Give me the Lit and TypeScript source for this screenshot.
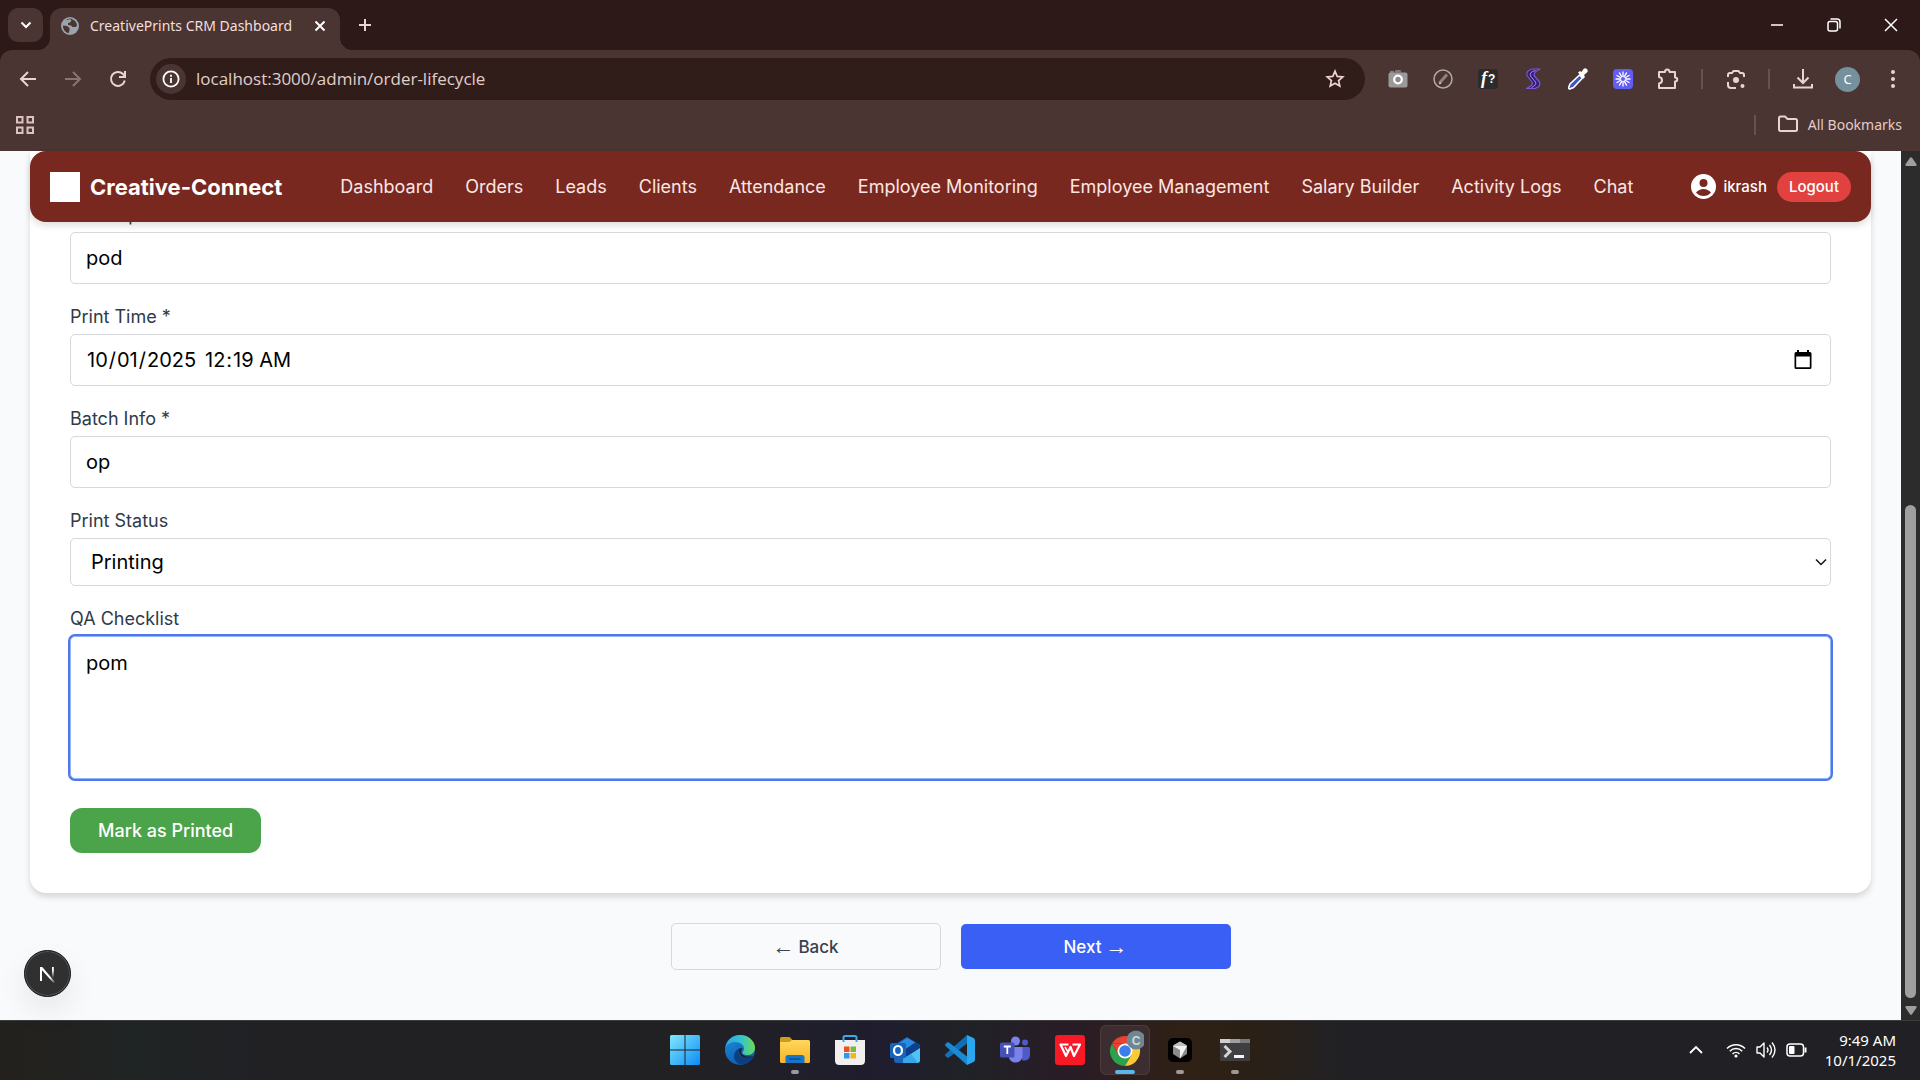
import { LitElement, html, css, svg } from "lit";
import { customElement } from "lit/decorators.js";

const NAV_LINKS = [
  "Dashboard",
  "Orders",
  "Leads",
  "Clients",
  "Attendance",
  "Employee Monitoring",
  "Employee Management",
  "Salary Builder",
  "Activity Logs",
  "Chat",
];

const rays = (n: number, cx: number, cy: number, r1: number, r2: number) =>
  Array.from({ length: n }, (_, i) => {
    const a = (i / n) * Math.PI * 2;
    return svg`<line x1=${cx + r1 * Math.cos(a)} y1=${cy + r1 * Math.sin(a)} x2=${cx + r2 * Math.cos(a)} y2=${cy + r2 * Math.sin(a)} />`;
  });

/* Browser window frame: tab strip, toolbar and bookmarks bar. */
@customElement("browser-chrome")
class BrowserChrome extends LitElement {
  static styles = css`
    :host {
      display: block;
      background: #2d1918;
      color: #f3dfdc;
      font-family: "Segoe UI", "Noto Sans", "Open Sans", sans-serif;
    }
    * {
      box-sizing: border-box;
    }
    button {
      border: 0;
      padding: 0;
      margin: 0;
      background: none;
      color: inherit;
      font: inherit;
      display: grid;
      place-items: center;
    }
    svg {
      display: block;
    }
    .tabs {
      display: flex;
      height: 50px;
      align-items: flex-start;
      padding: 8px 1px 0 8px;
    }
    .search {
      width: 35px;
      height: 34px;
      border-radius: 10px;
      background: #4a3533;
    }
    .tab {
      position: relative;
      display: flex;
      align-items: center;
      width: 290px;
      height: 42px;
      margin-left: 7px;
      padding: 0 12px 7px 11px;
      border-radius: 12px 12px 0 0;
      background: #4a3533;
      font-size: 14px;
      white-space: nowrap;
    }
    .tab::before,
    .tab::after {
      content: "";
      position: absolute;
      bottom: 0;
      width: 12px;
      height: 12px;
    }
    .tab::before {
      left: -12px;
      background: radial-gradient(circle at 0 0, transparent 12px, #4a3533 12px);
    }
    .tab::after {
      right: -12px;
      background: radial-gradient(circle at 100% 0, transparent 12px, #4a3533 12px);
    }
    .title {
      flex: 1;
      margin-left: 11px;
    }
    .plus {
      width: 34px;
      height: 34px;
      margin-left: 8px;
    }
    .window {
      display: flex;
      margin-left: auto;
    }
    .window button {
      width: 57px;
      height: 34px;
    }
    .panel {
      background: #4a3533;
      border-radius: 12px 12px 0 0;
    }
    .toolbar {
      display: flex;
      align-items: center;
      height: 58px;
      padding: 0 5px;
    }
    .toolbar > button {
      width: 45px;
      height: 42px;
      color: #ecd3cf;
    }
    .toolbar > .dim {
      color: #8d7472;
    }
    .omnibox {
      flex: 1;
      display: flex;
      align-items: center;
      height: 42px;
      margin-left: 10px;
      margin-right: 10px;
      padding: 0 20px 0 6px;
      border-radius: 21px;
      background: #301d1a;
    }
    .info {
      width: 30px;
      height: 30px;
      border-radius: 15px;
      background: #4a3533;
    }
    .url {
      flex: 1;
      min-width: 0;
      margin-left: 10px;
      border: 0;
      padding: 0 0 2px;
      background: none;
      outline: 0;
      color: #e0cecb;
      font-family: "Segoe UI", "Open Sans", "Noto Sans", sans-serif;
      font-size: 17px;
    }
    .sep {
      width: 2px;
      height: 20px;
      background: #6b514e;
    }
    .sep.first {
      margin: 0 10px 0 11px;
    }
    .sep.second {
      margin: 0 10px;
    }
    .avatar {
      width: 25px;
      height: 25px;
      border-radius: 13px;
      background: #76909c;
      font-size: 13px;
      color: #fff;
      display: grid;
      place-items: center;
    }
    .bookmarks {
      display: flex;
      align-items: center;
      height: 43px;
      padding: 0 18px 10px 16px;
      font-size: 14px;
      color: #e3cbc7;
    }
    .all {
      display: flex;
      gap: 10px;
      margin-left: 22px;
    }
    .bookmarks .sep {
      margin-left: auto;
    }
  `;

  render() {
    return html`
      <div class="tabs">
        <button class="search" aria-label="Search tabs">
          <svg width="14" height="14" viewBox="0 0 14 14" fill="none" stroke="#fff" stroke-width="2"><path d="M2.500 4.500 7 9l4.500-4.500" /></svg>
        </button>
        <div class="tab">
          <svg width="18" height="18" viewBox="0 0 18 18">
            <circle cx="9" cy="9" r="9" fill="#9aa5ab" />
            <path d="M2 8.500 6 9l2.500 2v2.500l-1 2.800A7.500 7.500 0 0 1 2 8.500ZM5 3.500 9 2l1.500 1.500L9 5.500 7 6v2l3 .5 1.500 1.500h3l1.500-1A7 7 0 0 0 12 2.700L10 1.500 6.500 2Z" fill="#4a3533" />
          </svg>
          <span class="title">CreativePrints CRM Dashboard</span>
          <button aria-label="Close tab">
            <svg width="16" height="16" viewBox="0 0 16 16" stroke="#fff" stroke-width="2"><path d="m3.500 3.500 9 9m0-9-9 9" /></svg>
          </button>
        </div>
        <button class="plus" aria-label="New tab">
          <svg width="14" height="14" viewBox="0 0 14 14" stroke="#ecd3cf" stroke-width="2"><path d="M7 1v12M1 7h12" /></svg>
        </button>
        <div class="window">
          <button aria-label="Minimize">
            <svg width="14" height="14" viewBox="0 0 14 14" stroke="#fff" stroke-width="1.500"><path d="M1 7h12" /></svg>
          </button>
          <button aria-label="Restore">
            <svg width="14" height="14" viewBox="0 0 14 14" fill="none" stroke="#fff" stroke-width="1.500"><rect x="1" y="3.500" width="9.500" height="9.500" rx="2" /><path d="M3.500 1H10a3 3 0 0 1 3 3v6.500" /></svg>
          </button>
          <button aria-label="Close">
            <svg width="14" height="14" viewBox="0 0 14 14" stroke="#fff" stroke-width="1.500"><path d="m1 1 12 12M13 1 1 13" /></svg>
          </button>
        </div>
      </div>
      <div class="panel">
        <div class="toolbar">
          <button aria-label="Back">
            <svg width="18" height="18" viewBox="0 0 18 18" fill="none" stroke="currentColor" stroke-width="2"><path d="M17 9H3M9 2 2 9l7 7" /></svg>
          </button>
          <button class="dim" aria-label="Forward">
            <svg width="18" height="18" viewBox="0 0 18 18" fill="none" stroke="currentColor" stroke-width="2"><path d="M1 9h14M9 2l7 7-7 7" /></svg>
          </button>
          <button aria-label="Reload">
            <svg width="18" height="18" viewBox="0 0 18 18" fill="none" stroke="currentColor" stroke-width="2"><path d="M15.800 10.500A7 7 0 1 1 14 4l2 2M16 1v6h-6" /></svg>
          </button>
          <div class="omnibox">
            <button class="info" aria-label="Site information">
              <svg width="18" height="18" viewBox="0 0 18 18" fill="none" stroke="#fff" stroke-width="1.800"><circle cx="9" cy="9" r="7.600" /><path d="M9 8v5M9 4.800v2" /></svg>
            </button>
            <input class="url" aria-label="Address" value="localhost:3000/admin/order-lifecycle" />
            <button aria-label="Bookmark this tab">
              <svg width="20" height="20" viewBox="0 0 20 20" fill="none" stroke="#ecd3cf" stroke-width="1.700"><path d="m10 2.200 2.200 5.200 5.600.5-4.200 3.700 1.200 5.500L10 14.200l-4.800 2.900 1.200-5.500L2.200 7.900l5.600-.5Z" /></svg>
            </button>
          </div>
          <button aria-label="Screenshot extension">
            <svg width="20" height="20" viewBox="0 0 20 20"><path d="M6.500 3.500 7.500 1h5l1 2.500Z" fill="#7b7b7b" /><rect x="2" y="1.800" width="4" height="3" fill="#7b7b7b" /><rect x="0.500" y="3.500" width="19" height="15" rx="2" fill="#9a9a9a" /><circle cx="10" cy="10.500" r="3.800" fill="#8b8b8b" stroke="#fff" stroke-width="2.200" /></svg>
          </button>
          <button aria-label="Inspect extension">
            <svg width="20" height="20" viewBox="0 0 20 20" fill="none"><circle cx="10" cy="10" r="9" stroke="#b5a6a3" stroke-width="1.500" /><path d="m6.500 14 7.500-8.500" stroke="#8f8381" stroke-width="3" /><path d="m6 14.500 2-.5" stroke="#d8cac8" stroke-width="1.500" /></svg>
          </button>
          <button aria-label="Font finder extension">
            <svg width="20" height="20" viewBox="0 0 20 20"><rect width="20" height="20" rx="3" fill="#2b2c2b" /><text x="3" y="14.500" font-family="Liberation Serif, serif" font-style="italic" font-weight="700" font-size="18" fill="#fff">f</text><text x="10" y="14" font-family="Liberation Sans, sans-serif" font-weight="700" font-size="12" fill="#fff">?</text></svg>
          </button>
          <button aria-label="S extension">
            <svg width="20" height="22" viewBox="0 0 20 22" fill="none"><path d="M17 1H9Q2.500 3 4 7.500L9 14q2 3-5.500 6.500H12q6.500-2 4.500-6.500L11.500 8Q9.500 5 17 1Z" fill="#38206e" stroke="#7b57e0" stroke-width="1.200" stroke-linejoin="round" /><path d="M12.500 2.500Q6 4 7.500 8l5 6q1.500 3-4 5.500" stroke="#a58bf0" stroke-width="1" /></svg>
          </button>
          <button aria-label="Color picker extension">
            <svg width="20" height="22" viewBox="0 0 20 22"><path d="m11.500 7 3 3-9 9.500-4 1.500-1-1 1.500-4Z" fill="#3c56c4" stroke="#fff" stroke-width="1.600" /><path d="m10 4.500 2-1.500 1.500 1 2-3q2-1.500 3.500.2t0 3.300l-3 2.500 1 2-1.800 1.800Z" fill="#fff" /></svg>
          </button>
          <button aria-label="Loom extension">
            <svg width="20" height="20" viewBox="0 0 20 20"><rect width="20" height="20" rx="4" fill="#625df5" /><g stroke="#fff" stroke-width="1.300" stroke-linecap="round">${rays(12, 10, 10, 3, 7)}</g><circle cx="10" cy="10" r="2.500" fill="none" stroke="#fff" stroke-width=".8" /></svg>
          </button>
          <button aria-label="Extensions">
            <svg width="22" height="22" viewBox="0 0 22 22" fill="none" stroke="#ecd3cf" stroke-width="2"><path d="M2 4h6c0-3.500 4.500-3.500 4.500 0H18v5.500c3 0 3 4 0 4V20H2v-4.500c4-.5 4-6 0-6.500Z" stroke-linejoin="round" /></svg>
          </button>
          <span class="sep first"></span>
          <button aria-label="Search with Lens">
            <svg width="20" height="20" viewBox="0 0 20 20" fill="none" stroke="#ecd3cf" stroke-width="2"><path d="M2 8V6q0-2 2-2h2l1.500-2h5L14 4h2q2 0 2 2v2M2 13v3q0 3 3 3h5" /><circle cx="10" cy="11" r="3" fill="#ecd3cf" stroke="none" /><circle cx="16.500" cy="17" r="2" fill="#ecd3cf" stroke="none" /></svg>
          </button>
          <span class="sep second"></span>
          <button aria-label="Downloads">
            <svg width="22" height="22" viewBox="0 0 22 22" fill="none" stroke="#ecd3cf" stroke-width="2"><path d="M11 1v14M5.500 9.500 11 15l5.500-5.500M2 16v3.500h18V16" /></svg>
          </button>
          <button aria-label="Profile"><span class="avatar">C</span></button>
          <button aria-label="Menu">
            <svg width="6" height="20" viewBox="0 0 6 20" fill="#ecd3cf"><circle cx="3" cy="3" r="2" /><circle cx="3" cy="10" r="2" /><circle cx="3" cy="17" r="2" /></svg>
          </button>
        </div>
        <div class="bookmarks">
          <button aria-label="Tab groups">
            <svg width="18" height="18" viewBox="0 0 18 18" fill="none" stroke="#ddc3bf" stroke-width="2"><rect x="1" y="1" width="5.500" height="5.500" /><rect x="11.500" y="1" width="5.500" height="5.500" /><rect x="1" y="11.500" width="5.500" height="5.500" /><rect x="11.500" y="11.500" width="5.500" height="5.500" /></svg>
          </button>
          <span class="sep"></span>
          <button>
            <span class="all">
              <svg width="20" height="18" viewBox="0 0 20 18" fill="none" stroke="#ecd3cf" stroke-width="2"><path d="M1 3q0-1.500 1.500-1.500H7L9.500 4h8Q19 4 19 5.500v9q0 1.500-1.500 1.500h-15Q1 16 1 14.500Z" /></svg>
              All Bookmarks
            </span>
          </button>
        </div>
      </div>
    `;
  }
}

/* The CRM page with the order lifecycle form. */
@customElement("crm-page")
class CrmPage extends LitElement {
  static styles = css`
    :host {
      display: grid;
      grid-template-columns: 1fr 19px;
      background: #f9fafb;
      font-family: Inter, sans-serif;
    }
    * {
      box-sizing: border-box;
    }
    button {
      border: 0;
      font: inherit;
      cursor: pointer;
    }
    .view {
      position: relative;
      display: grid;
      padding: 0 30px;
      align-items: start;
    }
    nav,
    main {
      grid-area: 1 / 1;
      min-width: 0;
    }
    nav {
      z-index: 1;
      display: flex;
      align-items: center;
      height: 71px;
      padding: 0 20px;
      border-radius: 16px;
      background: #792820;
      color: #fff;
      box-shadow: 0 4px 6px rgba(0, 0, 0, 0.12);
      white-space: nowrap;
    }
    .brand {
      display: flex;
      align-items: center;
      gap: 10px;
      font-size: 22px;
      font-weight: 700;
      line-height: 30px;
    }
    .logo {
      width: 30px;
      height: 30px;
      background: #fff;
    }
    .links {
      flex: 1;
      display: flex;
      justify-content: center;
      gap: 32px;
      list-style: none;
      margin: 0;
      padding: 0;
      font-size: 18px;
    }
    .links a {
      color: #fbe6e3;
      text-decoration: none;
    }
    .user {
      display: flex;
      align-items: center;
      gap: 7px;
      margin-right: 10px;
      font-size: 15px;
      font-weight: 500;
    }
    .logout {
      height: 30px;
      padding: 0 12px;
      border-radius: 15px;
      background: #e2423f;
      color: #fff;
      font-size: 15px;
      font-weight: 500;
    }
    .card {
      display: flex;
      flex-direction: column;
      gap: 20px;
      padding: 51px 40px 40px;
      border-radius: 0 0 16px 16px;
      background: #fff;
      box-shadow: 0 4px 6px rgba(0, 0, 0, 0.14);
    }
    .field {
      display: flex;
      flex-direction: column;
      gap: 4px;
    }
    label {
      font-size: 18px;
      line-height: 26px;
      color: #2f3a4a;
    }
    input,
    select,
    textarea,
    .moment {
      display: block;
      width: 100%;
      height: 52px;
      margin: 0;
      padding: 0 15px;
      border: 1px solid #d6d8dc;
      border-radius: 5px;
      background: #fff;
      color: #000;
      font: inherit;
      font-size: 20px;
      outline: 0;
    }
    .pick {
      display: grid;
      align-items: center;
      justify-items: end;
    }
    .pick > * {
      grid-area: 1 / 1;
    }
    .pick > svg {
      margin-right: 4px;
      pointer-events: none;
    }
    .moment {
      display: flex;
      align-items: center;
      gap: 6px;
    }
    .moment input {
      width: 112px;
      height: 30px;
      padding: 0;
      border: 0;
    }
    .moment input::-webkit-calendar-picker-indicator {
      display: none;
    }
    .calendar {
      display: grid;
      margin-left: auto;
      margin-right: 3px;
      padding: 0;
      background: none;
    }
    select {
      appearance: none;
      height: 48px;
      padding: 0 20px;
    }
    textarea {
      height: 143px;
      padding: 11px 15px;
      line-height: 30px;
      resize: none;
      border-color: #94b4f8;
      box-shadow: 0 0 0 2px #4f77ea;
    }
    .submit {
      align-self: flex-start;
      height: 45px;
      margin-top: 9px;
      padding: 0 28px;
      border-radius: 12px;
      background: #4ba34a;
      color: #fff;
      font-size: 18px;
      font-weight: 500;
    }
    .actions {
      display: grid;
      grid-template-columns: 270px 270px;
      justify-content: center;
      align-items: center;
      gap: 20px;
      margin-top: 30px;
      font-size: 17px;
      font-weight: 500;
    }
    .actions button {
      display: flex;
      align-items: center;
      justify-content: center;
      gap: 4px;
    }
    .back {
      height: 47px;
      border: 1px solid #d6d8dc;
      border-radius: 5px;
      background: #f9fafb;
      color: #374151;
    }
    .next {
      height: 45px;
      border-radius: 5px;
      background: #395ff5;
      color: #fff;
    }
    .arrow {
      font-family: "Liberation Sans", sans-serif;
      font-size: 22px;
      font-weight: 400;
      line-height: 22px;
    }
    .dev {
      position: absolute;
      left: 24px;
      bottom: 23px;
      width: 47px;
      height: 47px;
      padding: 0;
      border-radius: 50%;
      border: 1px solid #111;
      background: #303030;
      box-shadow: inset 0 0 0 1px #555, 0 14px 30px rgba(0, 0, 0, 0.08);
      display: grid;
      place-items: center;
    }
    .scroll {
      display: flex;
      flex-direction: column;
      align-items: center;
      padding: 6px 0 5px;
      background: #2c2c2c;
    }
    .room {
      flex: 346 0 0;
    }
    .thumb {
      flex: 504 0 0;
      width: 11px;
      margin-bottom: 8px;
      border-radius: 6px;
      background: #9f9f9f;
    }
  `;

  render() {
    return html`
      <div class="view">
        <nav>
          <div class="brand"><span class="logo"></span>Creative-Connect</div>
          <ul class="links">
            ${NAV_LINKS.map((l) => html`<li><a href="#">${l}</a></li>`)}
          </ul>
          <div class="user">
            <svg width="25" height="25" viewBox="0 0 25 25"><circle cx="12.500" cy="12.500" r="12.500" fill="#fff" /><circle cx="12.500" cy="9" r="4" fill="#792820" /><path d="M5 18.500q3-3.500 7.500-3.500t7.500 3.500q-3 3.500-7.500 3.500T5 18.500Z" fill="#792820" /></svg>
            <span>ikrash</span>
          </div>
          <button class="logout">Logout</button>
        </nav>
        <main>
          <form class="card">
            <div class="field">
              <label for="operator">Print Operator *</label>
              <input id="operator" value="pod" />
            </div>
            <div class="field">
              <label for="date">Print Time *</label>
              <div class="moment">
                <input id="date" type="date" value="2025-10-01" />
                <input type="time" aria-label="Print Time, hour and minute" value="00:19" />
                <button type="button" class="calendar" aria-label="Show date picker">
                  <svg width="18" height="20" viewBox="0 0 18 20"><path d="M3 0h2v2h8V0h2v2h1q1.500 0 1.500 1.500v14Q17.500 19 16 19H2Q.5 19 .5 17.500v-14Q.5 2 2 2h1ZM2.200 6.500v10.800h13.600V6.500Z" fill="#000" /></svg>
                </button>
              </div>
            </div>
            <div class="field">
              <label for="batch">Batch Info *</label>
              <input id="batch" value="op" />
            </div>
            <div class="field">
              <label for="status">Print Status</label>
              <div class="pick">
                <select id="status"><option>Printing</option></select>
                <svg width="12" height="12" viewBox="0 0 12 12" fill="none" stroke="#111" stroke-width="1.500"><path d="m1 3.500 5 5 5-5" /></svg>
              </div>
            </div>
            <div class="field">
              <label for="qa">QA Checklist</label>
              <textarea id="qa" .value=${"pom"}></textarea>
            </div>
            <button type="button" class="submit">Mark as Printed</button>
          </form>
          <div class="actions">
            <button class="back"><span class="arrow">←</span><span>Back</span></button>
            <button class="next"><span>Next</span><span class="arrow">→</span></button>
          </div>
        </main>
        <button class="dev" aria-label="Open developer tools">
          <svg width="18" height="18" viewBox="0 0 18 18" fill="none">
            <defs>
              <linearGradient id="a" x1="0" y1="0" x2="0" y2="1"><stop offset=".3" stop-color="#fff" /><stop offset="1" stop-color="#fff" stop-opacity="0" /></linearGradient>
              <linearGradient id="b" x1="0" y1="0" x2="1" y2="1"><stop offset=".65" stop-color="#fff" /><stop offset="1" stop-color="#fff" stop-opacity=".1" /></linearGradient>
            </defs>
            <path d="M1 16V2h2v14Z" fill="#fff" />
            <path d="M1 2h2.300L16 17l-1.500 1L1 3Z" fill="url(#b)" />
            <path d="M13 2h1.800v11H13Z" fill="url(#a)" />
          </svg>
        </button>
      </div>
      <div class="scroll" aria-hidden="true">
        <svg width="12" height="9" viewBox="0 0 12 9" fill="#9f9f9f"><path d="M5 .8q1-1.300 2 0l4.500 6.400Q12 9 10.500 9h-9Q0 9 .5 7.200Z" /></svg>
        <div class="room"></div>
        <div class="thumb"></div>
        <svg width="12" height="9" viewBox="0 0 12 9" fill="#9f9f9f"><path d="M5 8.200q1 1.300 2 0l4.500-6.400Q12 0 10.500 0h-9Q0 0 .5 1.800Z" /></svg>
      </div>
    `;
  }
}

/* Desktop taskbar with pinned apps and the tray. */
@customElement("task-bar")
class TaskBar extends LitElement {
  static styles = css`
    :host {
      display: grid;
      grid-template-columns: 1fr auto 1fr;
      align-items: center;
      height: 60px;
      box-sizing: border-box;
      border-top: 1px solid #3d3d3f;
      background: linear-gradient(90deg, #24211d 0, #1f2424 7%, #212124 14%, #212124 36%, #1f1d2e 46%, #1f2226 50%, #2a1c26 56%, #2f2114 62%, #2b2015 65%, #212125 70%, #212125 100%);
      color: #fff;
      font-family: "Segoe UI", "Noto Sans", "Open Sans", sans-serif;
    }
    * {
      box-sizing: border-box;
    }
    button {
      border: 0;
      padding: 0;
      background: none;
      color: inherit;
      display: grid;
      place-items: center;
    }
    .apps {
      grid-column: 2;
      display: flex;
      gap: 5px;
      padding-bottom: 1px;
    }
    .app {
      position: relative;
      width: 50px;
      height: 50px;
      border-radius: 6px;
    }
    .app.active {
      background: #3c2d31;
      box-shadow: inset 0 0 0 1px #4a3a3b;
    }
    .running::after,
    .active::after {
      content: "";
      position: absolute;
      left: 50%;
      bottom: 1px;
      width: 8px;
      height: 4px;
      margin-left: -4px;
      border-radius: 2px;
      background: #9d999b;
    }
    .active::after {
      width: 20px;
      margin-left: -10px;
      background: #55b9ea;
    }
    .tray {
      display: flex;
      align-items: center;
      justify-content: flex-end;
      padding: 0 24px 2px 0;
    }
    .chev {
      margin-right: 23px;
    }
    .status {
      display: flex;
      align-items: center;
      gap: 10px;
      margin-right: 18px;
    }
    .clock {
      text-align: right;
      font-size: 15px;
      line-height: 20px;
    }
  `;

  render() {
    return html`
      <div class="apps">
        <button class="app" aria-label="Start">
          <svg width="30" height="30" viewBox="0 0 30 30"><defs><linearGradient id="w" x1="0" y1="0" x2="30" y2="30" gradientUnits="userSpaceOnUse"><stop stop-color="#7fe8fd" /><stop offset="1" stop-color="#0c8bf5" /></linearGradient></defs><path d="M1.500 0H14.500v14.500H0V1.500Q0 0 1.500 0ZM15.500 0h13Q30 0 30 1.500V14.500H15.500ZM0 15.500h14.500V30H1.500Q0 30 0 28.500ZM15.500 15.500H30v13q0 1.500-1.500 1.500H15.500Z" fill="url(#w)" /></svg>
        </button>
        <button class="app" aria-label="Edge">
          <svg width="30" height="30" viewBox="0 0 30 30"><defs><linearGradient id="e1" x1="0" y1=".3" x2="1" y2=".3"><stop stop-color="#2ba5dd" /><stop offset=".55" stop-color="#35c4cf" /><stop offset="1" stop-color="#6edb4a" /></linearGradient><linearGradient id="e2" x1="0" y1="0" x2=".6" y2="1"><stop stop-color="#1c8fe0" /><stop offset="1" stop-color="#0e58a8" /></linearGradient></defs><circle cx="15" cy="15" r="15" fill="url(#e2)" /><path d="M.2 13C1.500 5 7.500 0 15 0c9 0 15 6.500 15 12.500 0 5-3.500 7.500-7.500 7.500-3 0-5.500-1-5-2.500s1.500-1.500 1.500-4C19 10 15 7 10.500 7 5.500 7 1.500 9.500.2 13Z" fill="url(#e1)" /><path d="M28.300 21.500c-3 1.500-7 1.800-10.300.5-4-1.500-5.500-5-3.500-8.500-4.500 1-7.500 8-3.500 13 1.700 2 3.500 3 6 3.300 5-.3 9-3.500 11.300-8.300Z" fill="#0b3f80" /><path d="M14.500 13.500c-2 4 1 8 5 9 3 .7 6 .3 8.800-1-.5-.6-3 .2-5.800 0-5-.5-8-4-5-8-1-.8-2-.8-3 0Z" fill="#202330" /></svg>
        </button>
        <button class="app running" aria-label="File Explorer">
          <svg width="30" height="28" viewBox="0 0 30 28"><defs><linearGradient id="f" x1="0" y1="0" x2="0" y2="1"><stop stop-color="#ffd75e" /><stop offset="1" stop-color="#f8b526" /></linearGradient></defs><path d="M0 12V2.500Q0 1 1.500 1H9q1.500 0 2 1.500L12.500 4l-3 8Z" fill="#d09a1b" /><path d="M0 6h9.500L12 4h16.500Q30 4 30 5.500v20q0 1.500-1.500 1.500h-27Q0 27 0 25.500Z" fill="url(#f)" /><path d="M5.500 27v-5.500q0-2.500 2.500-2.500h14q2.500 0 2.500 2.500V27Z" fill="#1575c8" /><path d="M9.500 23h11" stroke="#0b4f93" stroke-width="1.500" /></svg>
        </button>
        <button class="app" aria-label="Store">
          <svg width="30" height="30" viewBox="0 0 30 30"><path d="M8.500 6V2.500Q8.500 1 10 1h10q1.500 0 1.500 1.500V6" fill="none" stroke="#3da8e8" stroke-width="2" /><path d="M0 5h30v20.500q0 4.500-4.500 4.500h-21Q0 30 0 25.500Z" fill="#f1f0ef" /><path d="M8.500 5v2M21.500 5v2" stroke="#3da8e8" stroke-width="2" /><path d="M9 11.500h5.500V17H9Z" fill="#e8502a" /><path d="M15.500 11.500H21V17h-5.500Z" fill="#7cb832" /><path d="M9 18h5.500v5.500H9Z" fill="#2a9be8" /><path d="M15.500 18H21v5.500h-5.500Z" fill="#f4b41c" /></svg>
        </button>
        <button class="app" aria-label="Outlook">
          <svg width="30" height="28" viewBox="0 0 30 28"><path d="M4 9 17 1l13 8v15q0 3-3 3H7q-3 0-3-3Z" fill="#1b64b8" /><path d="m8 8 9-6 9 5-13 9Z" fill="#2c8ae0" /><path d="m14 14 12-8 4 4v4L17 22Z" fill="#0d3f8c" /><path d="m30 12-17 11v4h14q3 0 3-3Z" fill="#4fc4f3" /><path d="m13 23 8-5 7 9H13Z" fill="#36a8ea" /><rect x="0" y="7" width="16" height="15" rx="1.500" fill="#1564c0" /><ellipse cx="8" cy="14.500" rx="4" ry="4.500" fill="none" stroke="#fff" stroke-width="2.200" /></svg>
        </button>
        <button class="app" aria-label="Code editor">
          <svg width="30" height="30" viewBox="0 0 30 30"><path d="m22 0 6.500 3q1.500.7 1.500 2.500v19q0 1.800-1.500 2.500L22 30Z" fill="#2aa7ee" /><path d="M22 0v8.500L4 22.500q-1 .5-2 0l-1.500-1.500q-.8-1 0-2Z" fill="#0f6fb8" /><path d="M22 30v-8.500L4 7.500q-1-.5-2 0L.5 9q-.8 1 0 2Z" fill="#1a8ad4" /></svg>
        </button>
        <button class="app" aria-label="Teams">
          <svg width="30" height="28" viewBox="0 0 30 28"><circle cx="15.500" cy="5" r="4.500" fill="#7b83eb" /><circle cx="25" cy="6.500" r="3" fill="#5059c9" /><path d="M20 11h8.500q1.500 0 1.500 1.500V19a5.500 5.500 0 0 1-8 5Z" fill="#5059c9" /><path d="M9 11h12.500q1 0 1 1.200V20a7 7 0 0 1-13.500 2Z" fill="#7b83eb" /><rect y="6.500" width="14.500" height="15" rx="1.500" fill="#4550b8" /><path d="M3.800 10.500h7M7.300 10.500v7.500" stroke="#fff" stroke-width="1.800" /></svg>
        </button>
        <button class="app" aria-label="WPS Office">
          <svg width="30" height="30" viewBox="0 0 30 30"><rect width="30" height="30" rx="3" fill="#f91826" /><path d="M13.500 9.500H5.500l5.500 11.500 4.500-9 3.500 9 6-11.500h-7.500" fill="none" stroke="#fff" stroke-width="2.200" stroke-linejoin="round" /><path d="m10 12 3 5" stroke="#fff" stroke-width="1.500" /></svg>
        </button>
        <button class="app active" aria-label="Chrome">
          <svg width="38" height="40" viewBox="0 0 38 40"><g transform="translate(19 21)"><path d="M-13-7.500A15 15 0 0 1 13-7.500H0Z" fill="#e8412f" /><path d="M-13-7.500A15 15 0 0 0 0 15L6.500 3.700-6.500 3.700Z" fill="#2ba24c" /><path d="M13-7.500A15 15 0 0 1 0 15L6.500 3.700 0-7.500Z" fill="#fcc934" /><path d="M-13-7.500-6.500 3.700 0-7.500Z" fill="#e8412f" /><circle r="7.500" fill="#fff" /><circle r="5.800" fill="#3b7ded" /></g><circle cx="30" cy="10" r="9.500" fill="#6f8792" /><text x="30" y="14.500" text-anchor="middle" font-family="Liberation Sans, sans-serif" font-size="12" font-weight="700" fill="#cfd8dc">C</text></svg>
        </button>
        <button class="app running" aria-label="Cursor">
          <svg width="24" height="24" viewBox="0 0 24 24"><rect width="24" height="24" rx="5" fill="#000" /><path d="m12 3.500 7 4v8.500l-7 4.500-7-4.500V7.500Z" fill="#8a8a8a" /><path d="m5 7.500 7-4 7 4-7 2Z" fill="#bdbdbd" /><path d="M5 8h14l-7 12.500V12Z" fill="#f2f2f2" /></svg>
        </button>
        <button class="app running" aria-label="Terminal">
          <svg width="30" height="24" viewBox="0 0 30 24"><rect y="1" width="30" height="22" rx="1" fill="#3f3f41" /><path d="M0 1h30v4H0Z" fill="#7a7a7b" /><path d="M0 1h10v4H0Z" fill="#cfcfcf" /><path d="M10 1h10v4H10Z" fill="#a0a0a0" /><path d="m4.500 8 5.500 5.500L4.500 19" fill="none" stroke="#d5d5d5" stroke-width="3" /><path d="M14 18.500h10" stroke="#f5f5f5" stroke-width="3" /></svg>
        </button>
      </div>
      <div class="tray">
        <button class="chev" aria-label="Show hidden icons">
          <svg width="14" height="10" viewBox="0 0 14 10" fill="none" stroke="#fff" stroke-width="1.800"><path d="m1 8 6-6 6 6" /></svg>
        </button>
        <div class="status">
          <svg width="20" height="16" viewBox="0 0 20 16" fill="none" stroke="#fff" stroke-width="1.500"><path d="M1 6.500a12.500 12.500 0 0 1 18 0M3.800 9.200a8.700 8.700 0 0 1 12.400 0M6.500 12a5 5 0 0 1 7 0" /><circle cx="10" cy="14" r="1.600" fill="#fff" stroke="none" /></svg>
          <svg width="20" height="18" viewBox="0 0 20 18" fill="none" stroke="#fff" stroke-width="1.400"><path d="M1 6h3l4-4v14l-4-4H1Z" stroke-linejoin="round" /><path d="M11 6.500q2 2.500 0 5M13.500 4q4 5 0 10M16 1.500q6 7.500 0 15" /></svg>
          <svg width="21" height="14" viewBox="0 0 21 14" fill="none"><rect x="1" y="1" width="16.500" height="12" rx="3" stroke="#fff" stroke-width="1.500" /><rect x="3" y="3" width="5.500" height="8" rx="1" fill="#fff" /><path d="M19.500 4.500v5" stroke="#fff" stroke-width="2" /></svg>
        </div>
        <div class="clock">9:49 AM<br />10/1/2025</div>
      </div>
    `;
  }
}

@customElement("app-root")
class AppRoot extends LitElement {
  static styles = css`
    :host {
      display: flex;
      flex-direction: column;
      min-height: 100vh;
    }
    crm-page {
      flex: 1;
    }
  `;

  render() {
    return html`<browser-chrome></browser-chrome><crm-page></crm-page><task-bar></task-bar>`;
  }
}
